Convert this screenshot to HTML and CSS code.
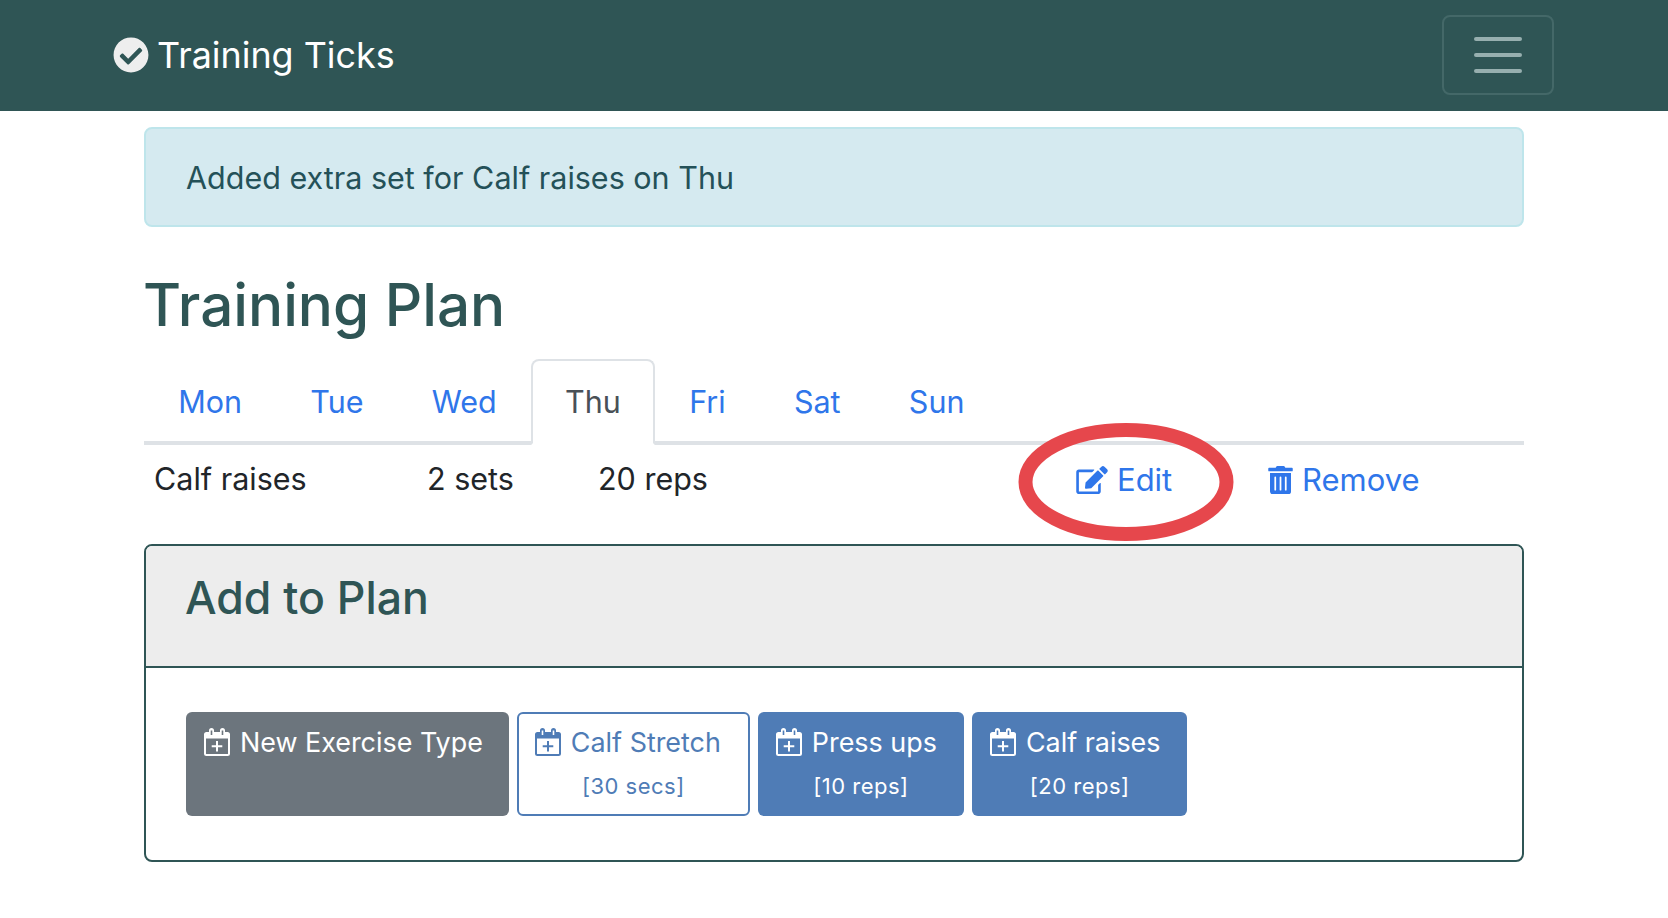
FILE: index.html
```html
<!DOCTYPE html>
<html lang="en">
<head>
  <meta charset="UTF-8" />
  <title>Training Ticks</title>
  <link rel="stylesheet" href="styles.css">
</head>
<body>
  <svg class="icon-defs" aria-hidden="true">
    <symbol id="i-check" viewBox="0 0 512 512"><path fill="currentColor" d="M504 256c0 136.967-111.033 248-248 248S8 392.967 8 256 119.033 8 256 8s248 111.033 248 248zM227.314 387.314l184-184c6.248-6.248 6.248-16.379 0-22.627l-22.627-22.627c-6.248-6.249-16.379-6.249-22.628 0L216 308.118l-70.059-70.059c-6.248-6.248-16.379-6.248-22.628 0l-22.627 22.627c-6.248 6.248-6.248 16.379 0 22.627l104 104c6.249 6.25 16.379 6.25 22.628.001z"/></symbol>
    <symbol id="i-edit" viewBox="0 0 576 512"><path fill="currentColor" d="M402.6 83.2l90.2 90.2c3.8 3.8 3.8 10 0 13.8L274.4 405.6l-92.8 10.3c-12.4 1.4-22.9-9.1-21.5-21.5l10.3-92.8L388.8 83.2c3.8-3.8 10-3.8 13.8 0zm162-22.9l-48.8-48.8c-15.2-15.2-39.9-15.2-55.2 0l-35.4 35.4c-3.8 3.8-3.8 10 0 13.8l90.2 90.2c3.8 3.8 10 3.8 13.8 0l35.4-35.4c15.2-15.3 15.2-40 0-55.2z"/><path fill="currentColor" d="M402.3 344.9l32-32c5-5 13.7-1.5 13.7 5.7V464c0 26.5-21.5 48-48 48H48c-26.5 0-48-21.5-48-48V112c0-26.500 21.5-48 48-48h273.5c7.1 0 10.7 8.6 5.7 13.7l-32 32c-1.5 1.5-3.5 2.3-5.7 2.3H48v352h352V350.5c0-2.1.8-4.1 2.3-5.6z"/></symbol>
    <symbol id="i-trash" viewBox="0 0 448 512"><path fill="currentColor" d="M32 464a48 48 0 0 0 48 48h288a48 48 0 0 0 48-48V128H32zm272-256a16 16 0 0 1 32 0v224a16 16 0 0 1-32 0zm-96 0a16 16 0 0 1 32 0v224a16 16 0 0 1-32 0zm-96 0a16 16 0 0 1 32 0v224a16 16 0 0 1-32 0zM432 32H312l-9.4-18.7A24 24 0 0 0 281.1 0H166.8a23.72 23.72 0 0 0-21.4 13.3L136 32H16A16 16 0 0 0 0 48v32a16 16 0 0 0 16 16h416a16 16 0 0 0 16-16V48a16 16 0 0 0-16-16z"/></symbol>
    <symbol id="i-cal" viewBox="0 0 26 28"><path fill="currentColor" fill-rule="evenodd" d="M2.500 4H5V2.500a2.500 2.500 0 0 1 5 0V4h6V2.500a2.500 2.500 0 0 1 5 0V4h2.500A2.500 2.500 0 0 1 26 6.500v19a2.500 2.500 0 0 1-2.500 2.500h-21A2.500 2.500 0 0 1 0 25.500v-19A2.500 2.500 0 0 1 2.500 4zM6.700 2.500v4.500h1.600V2.500zm11 0v4.500h1.600V2.500zM2 10.500v15a.5.5 0 0 0 .5.5h21a.5.5 0 0 0 .5-.5v-15z"/><path fill="currentColor" d="M12 13h2v4.300h4.300v2H14v4.200h-2v-4.200H7.700v-2H12z"/></symbol>
  </svg>

  <nav class="navbar">
    <a class="brand" href="#">
      <svg class="brand-icon"><use href="#i-check"/></svg>
      <span>Training Ticks</span>
    </a>
    <button class="toggler" type="button" aria-label="Menu">
      <span class="toggler-bar"></span>
      <span class="toggler-bar"></span>
      <span class="toggler-bar"></span>
    </button>
  </nav>

  <main class="container">
    <div class="alert">Added extra set for Calf raises on Thu</div>

    <h1>Training Plan</h1>

    <ul class="tabs">
      <li class="tab"><a href="#">Mon</a></li>
      <li class="tab"><a href="#">Tue</a></li>
      <li class="tab"><a href="#">Wed</a></li>
      <li class="tab active"><a href="#">Thu</a></li>
      <li class="tab"><a href="#">Fri</a></li>
      <li class="tab"><a href="#">Sat</a></li>
      <li class="tab"><a href="#">Sun</a></li>
    </ul>

    <div class="plan-row">
      <span class="col-name">Calf raises</span>
      <span class="col-sets">2 sets</span>
      <span class="col-reps">20 reps</span>
      <a class="action action-edit" href="#">
        <svg class="icon-edit"><use href="#i-edit"/></svg>Edit
      </a>
      <a class="action action-remove" href="#">
        <svg class="icon-trash"><use href="#i-trash"/></svg>Remove
      </a>
      <svg class="circle-mark" viewBox="0 0 216 120" aria-hidden="true">
        <ellipse cx="108" cy="60" rx="100.500" ry="52" fill="none" stroke="#e6474c" stroke-width="14"/>
      </svg>
    </div>

    <section class="card">
      <h2 class="card-header">Add to Plan</h2>
      <div class="card-body">
        <a class="btn btn-grey" href="#">
          <span class="btn-title"><svg class="icon-cal"><use href="#i-cal"/></svg>New Exercise Type</span>
        </a>
        <a class="btn btn-outline" href="#">
          <span class="btn-title"><svg class="icon-cal"><use href="#i-cal"/></svg>Calf Stretch</span>
          <small>[30 secs]</small>
        </a>
        <a class="btn btn-blue" href="#">
          <span class="btn-title"><svg class="icon-cal"><use href="#i-cal"/></svg>Press ups</span>
          <small>[10 reps]</small>
        </a>
        <a class="btn btn-blue" href="#">
          <span class="btn-title"><svg class="icon-cal"><use href="#i-cal"/></svg>Calf raises</span>
          <small>[20 reps]</small>
        </a>
      </div>
    </section>
  </main>
</body>
</html>
```

FILE: styles.css
```css
body {
  font-family: Inter, "Liberation Sans", sans-serif;
  font-size: 30.5px;
  margin: 0;
  background-color: #ffffff;
  color: #212529;
  overflow: hidden;
}

a {
  text-decoration: none;
}

.icon-defs {
  display: none;
}

.navbar {
  display: flex;
  justify-content: space-between;
  align-items: center;
  box-sizing: border-box;
  height: 111px;
  padding: 0 114px 1px 113px;
  background-color: #2f5555;
}

.brand {
  display: flex;
  align-items: center;
  gap: 8px;
  color: #ffffff;
  font-size: 35.9px;
}

.brand-icon {
  width: 36px;
  height: 36px;
  color: #eeeeee;
}

.toggler {
  display: flex;
  flex-direction: column;
  justify-content: center;
  align-items: center;
  gap: 12px;
  width: 112px;
  height: 80px;
  background: none;
  border: 2px solid #446868;
  border-radius: 8px;
}

.toggler-bar {
  display: block;
  width: 48px;
  height: 4px;
  border-radius: 2px;
  background-color: #97afaf;
}

.container {
  width: 1380px;
  margin: 0 auto;
  padding-top: 16px;
}

.alert {
  box-sizing: border-box;
  height: 100px;
  padding: 0 40px;
  display: flex;
  align-items: center;
  background-color: #d5eaf0;
  border: 2px solid #bee5eb;
  border-radius: 8px;
  color: #245158;
}

h1 {
  margin: 43px 0 19px -1px;
  font-size: 58.4px;
  line-height: 70px;
  font-weight: 500;
  color: #2f5555;
}

.tabs {
  display: flex;
  list-style: none;
  margin: 0;
  padding: 0;
  height: 86px;
  box-sizing: border-box;
  border-bottom: 4px solid #dee2e6;
}

.tab a {
  display: flex;
  align-items: center;
  box-sizing: border-box;
  height: 86px;
  padding: 0 32.15px 2px;
  color: #2f76ea;
  border: 2px solid transparent;
  border-radius: 8px 8px 0 0;
}

.tab.active a {
  color: #495057;
  background-color: #ffffff;
  border-color: #dee2e6 #dee2e6 #ffffff;
}

.plan-row {
  position: relative;
  display: flex;
  align-items: flex-start;
  box-sizing: border-box;
  height: 95px;
  padding-top: 15px;
  margin-bottom: 4px;
  line-height: 38px;
}

.col-name {
  margin-left: 10px;
  width: 273px;
}

.col-sets {
  width: 171px;
}

.col-reps {
  width: 478px;
}

.action {
  display: flex;
  align-items: center;
  margin-top: 1px;
  color: #2f76ea;
  font-size: 31px;
}

.action-edit {
  gap: 9px;
  width: 192px;
}

.action-remove {
  gap: 9px;
}

.icon-edit {
  width: 32px;
  height: 28px;
}

.icon-trash {
  width: 25px;
  height: 28px;
}

.circle-mark {
  position: absolute;
  left: 874px;
  top: -23px;
  width: 216px;
  height: 120px;
}

.card {
  box-sizing: border-box;
  height: 318px;
  border: 2px solid #2f5555;
  border-radius: 8px;
  overflow: hidden;
}

.card-header {
  margin: 0;
  height: 122px;
  box-sizing: border-box;
  padding: 25px 39px 0;
  background-color: #ededed;
  border-bottom: 2px solid #2f5555;
  font-size: 44.6px;
  line-height: 54px;
  font-weight: 500;
  color: #2f5555;
}

.card-body {
  display: flex;
  gap: 8px;
  padding: 44px 40px;
}

.btn {
  box-sizing: border-box;
  height: 104px;
  padding: 8px 16px 0;
  display: flex;
  flex-direction: column;
  align-items: center;
  border-radius: 6px;
  font-size: 26.9px;
  border: 2px solid transparent;
}

.btn-title {
  display: flex;
  align-items: center;
  gap: 10px;
  height: 40px;
  padding-right: 9px;
}

.btn-grey .btn-title {
  padding-right: 8px;
}

.btn-outline .btn-title {
  padding-right: 11px;
}

.btn small {
  margin-top: 8px;
  font-size: 22px;
  line-height: 32px;
  letter-spacing: 0.5px;
}

.icon-cal {
  width: 26px;
  height: 28px;
}

.btn-grey {
  background-color: #6c757d;
  color: #ffffff;
}

.btn-blue {
  background-color: #4f7cb6;
  color: #ffffff;
}

.btn-outline {
  background-color: #ffffff;
  border-color: #4f7cb6;
  color: #4f7cb6;
}
```
